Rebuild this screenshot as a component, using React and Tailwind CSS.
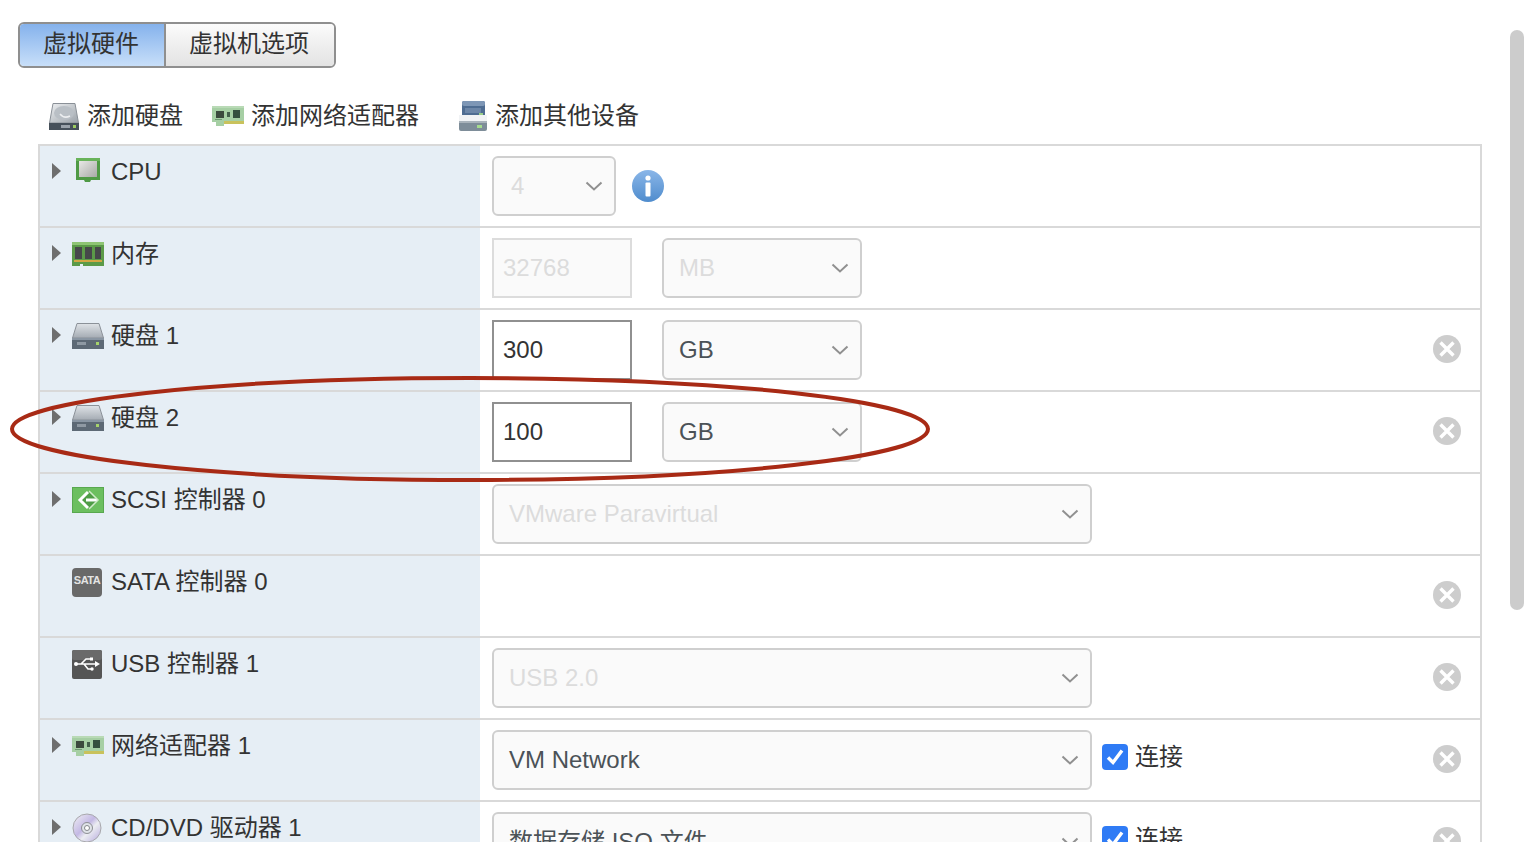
import React from 'react';

const Chevron = () => (
  <svg width="18" height="10" viewBox="0 0 18 10" className="shrink-0">
    <path d="M1.5 1.5 L9 8.5 L16.5 1.5" fill="none" stroke="#909090" strokeWidth="2" />
  </svg>
);

const Arrow = () => (
  <svg width="9" height="16" viewBox="0 0 9 16" className="shrink-0">
    <path d="M0 0 L9 8 L0 16 Z" fill="#6e6e6e" />
  </svg>
);

const HddIcon = () => (
  <svg width="32" height="26" viewBox="0 0 32 26">
    <defs>
      <linearGradient id="hddTop" x1="0" y1="0" x2="0" y2="1">
        <stop offset="0" stopColor="#dfe3e7" />
        <stop offset="1" stopColor="#a4abb3" />
      </linearGradient>
    </defs>
    <path d="M5 0.5 H27 L31.5 15 H0.5 Z" fill="url(#hddTop)" stroke="#8b9198" />
    <rect x="0" y="15" width="32" height="11" fill="#5d6975" />
    <rect x="0" y="15" width="32" height="2" fill="#8a96a3" />
    <rect x="5" y="19" width="9" height="3" fill="#8f99a3" />
    <rect x="24" y="19" width="3" height="3" fill="#a6d36b" />
  </svg>
);

const BigHddIcon = () => (
  <svg width="30" height="27" viewBox="0 0 30 27">
    <defs>
      <linearGradient id="bigHdd" x1="0" y1="0" x2="1" y2="1">
        <stop offset="0" stopColor="#eef0f2" />
        <stop offset="1" stopColor="#9aa1a8" />
      </linearGradient>
    </defs>
    <path d="M4 0.5 H26 L29.5 20 H0.5 Z" fill="url(#bigHdd)" stroke="#8a9097" />
    <ellipse cx="15" cy="10" rx="10" ry="7" fill="#b9bfc5" />
    <path d="M11 11 Q15 16 21 13" fill="none" stroke="#eceef0" strokeWidth="1.5" />
    <rect x="0" y="20" width="30" height="7" fill="#46505a" />
    <rect x="12" y="22" width="9" height="3" fill="#9aa2aa" />
    <rect x="24" y="22" width="3" height="3" fill="#9ccc62" />
  </svg>
);

const NicIcon = () => (
  <svg width="32" height="20" viewBox="0 0 32 20">
    <path d="M0 0 H32 V17 H31 V18 H12 V20 H4 V16 H0 Z" fill="#a6cfa4" />
    <path d="M0 0 H32 V2 H0 Z" fill="#b9dab6" />
    <rect x="4" y="5" width="8" height="7" fill="#3b4a3d" />
    <rect x="15" y="6" width="3" height="5" fill="#44604c" />
    <rect x="21" y="4" width="7" height="8" fill="#35503f" />
    <rect x="12" y="15" width="20" height="3" fill="#c9c25c" />
    <rect x="3" y="13" width="7" height="1" fill="#6f9a72" />
  </svg>
);

const StorageIcon = () => (
  <svg width="28" height="30" viewBox="0 0 28 30">
    <rect x="3" y="0" width="23" height="16" rx="2" fill="#4f6d92" />
    <rect x="3" y="0" width="23" height="5" rx="2" fill="#7e97b6" />
    <rect x="6" y="7" width="16" height="5" fill="#6d87a8" />
    <rect x="20" y="12" width="4" height="2" fill="#9bd08a" />
    <rect x="0" y="14" width="28" height="7" fill="#f1f3f5" />
    <rect x="0" y="20" width="28" height="10" rx="2" fill="#7e8d99" />
    <rect x="0" y="20" width="28" height="2" fill="#a9b3bb" />
    <rect x="18" y="24" width="5" height="3" fill="#a5dc8e" />
  </svg>
);

const CpuIcon = () => (
  <svg width="24" height="24" viewBox="0 0 24 24">
    <defs>
      <linearGradient id="cpuCore" x1="0" y1="0" x2="1" y2="1">
        <stop offset="0" stopColor="#e8e8e6" />
        <stop offset="1" stopColor="#a8aaa6" />
      </linearGradient>
    </defs>
    <path d="M0 0 H24 V22 H15 L14 24 H9 L8 22 H0 Z" fill="#4f9a45" />
    <path d="M0 0 H24 V3 H0 Z" fill="#68b35a" />
    <rect x="3" y="3" width="18" height="16" fill="url(#cpuCore)" />
  </svg>
);

const RamIcon = () => (
  <svg width="32" height="24" viewBox="0 0 32 24">
    <rect x="0" y="0" width="32" height="22" fill="#5b9a48" />
    <rect x="0" y="0" width="32" height="3" fill="#8ec474" />
    <rect x="3" y="5" width="7" height="12" fill="#46484a" />
    <rect x="13" y="5" width="7" height="12" fill="#46484a" />
    <rect x="23" y="5" width="6" height="12" fill="#46484a" />
    <rect x="2" y="18" width="28" height="2" fill="#d3a642" />
    <rect x="0" y="22" width="8" height="2" fill="#5b9a48" />
    <rect x="11" y="22" width="21" height="2" fill="#5b9a48" />
  </svg>
);

const ScsiIcon = () => (
  <svg width="32" height="26" viewBox="0 0 32 26">
    <rect width="32" height="26" fill="#58a84e" />
    <rect x="1" y="1" width="30" height="24" fill="#6cbf5f" />
    <path d="M17 4 L26 13 L17 22 L8 13 Z" fill="#4f9d46" />
    <path d="M16 5 L8 13 L16 21" fill="none" stroke="#fff" strokeWidth="3" />
    <path d="M14 13 H25" stroke="#fff" strokeWidth="3" />
    <path d="M17 4 L26 13 L17 22" fill="none" stroke="#cfeac8" strokeWidth="1.5" />
  </svg>
);

const SataIcon = () => (
  <div className="w-[30px] h-[29px] rounded-sm bg-[#696969] flex items-center justify-center pb-1 text-[#e4e4e4] text-[11px] font-bold leading-none tracking-[-0.5px]">
    SATA
  </div>
);

const UsbIcon = () => (
  <svg width="30" height="29" viewBox="0 0 30 29">
    <rect width="30" height="29" rx="2" fill="#555" />
    <rect width="30" height="10" rx="2" fill="#6a6a6a" />
    <path d="M3 14 H26 M9 14 L14 9 H19 M12 14 L16 19 H19" fill="none" stroke="#fff" strokeWidth="1.6" />
    <path d="M23 11 L28 14 L23 17 Z" fill="#fff" />
    <circle cx="4" cy="14" r="2" fill="#fff" />
    <rect x="18" y="7.5" width="3" height="3" fill="#fff" />
    <circle cx="20" cy="19" r="1.7" fill="#fff" />
  </svg>
);

const DiscIcon = () => (
  <svg width="30" height="30" viewBox="0 0 30 30">
    <defs>
      <linearGradient id="disc" x1="0" y1="0" x2="1" y2="1">
        <stop offset="0" stopColor="#f2f2f4" />
        <stop offset="0.45" stopColor="#c3b8e4" />
        <stop offset="0.6" stopColor="#eceef2" />
        <stop offset="1" stopColor="#b4a8dd" />
      </linearGradient>
    </defs>
    <circle cx="15" cy="15" r="14" fill="url(#disc)" stroke="#a8a8ac" />
    <circle cx="15" cy="15" r="5.5" fill="#dfe3e8" stroke="#8d8f94" />
    <circle cx="15" cy="15" r="2.5" fill="#fff" stroke="#85878c" />
  </svg>
);

const InfoIcon = () => (
  <svg width="32" height="32" viewBox="0 0 32 32" className="shrink-0">
    <defs>
      <linearGradient id="info" x1="0" y1="0" x2="0" y2="1">
        <stop offset="0" stopColor="#8ab6e8" />
        <stop offset="1" stopColor="#4f8ccd" />
      </linearGradient>
    </defs>
    <circle cx="16" cy="16" r="16" fill="url(#info)" />
    <circle cx="16" cy="8" r="2.6" fill="#fff" />
    <rect x="13.5" y="12.5" width="5" height="14" rx="1" fill="#fff" />
  </svg>
);

const RemoveIcon = () => (
  <svg width="28" height="28" viewBox="0 0 28 28" className="shrink-0">
    <circle cx="14" cy="14" r="14" fill="#cdcdcd" />
    <path d="M7.5 7.5 L20.5 20.5 M20.5 7.5 L7.5 20.5" stroke="#fff" strokeWidth="3.4" />
  </svg>
);

const SelectBox = ({ value, width, disabled, pad = 'pl-[15px]' }) => (
  <div className={`${width} ${pad} h-[60px] shrink-0 rounded-md border-2 border-[#cfcfcf] ${disabled ? 'text-[#dcdcdc]' : 'text-[#4b5257]'} bg-[#fafafa] flex items-center justify-between pr-[11px]`}>
    <span>{value}</span>
    <Chevron />
  </div>
);

const SizeInput = ({ value, disabled }) => (
  <div className={`w-[140px] h-[60px] shrink-0 border-2 flex items-center pl-[9px] ${disabled ? 'border-[#dcdcdc] bg-[#fafafa] text-[#dcdcdc]' : 'border-[#909090] bg-white text-[#333]'}`}>
    {value}
  </div>
);

const Connect = () => (
  <div className="flex items-center gap-[7px] ml-[10px] -mt-[6px]">
    <svg width="26" height="26" viewBox="0 0 26 26">
      <rect width="26" height="26" rx="4" fill="#2f7bf5" />
      <path d="M6 13.5 L11 18.5 L20 6.5" fill="none" stroke="#fff" strokeWidth="3.4" />
    </svg>
    <span>连接</span>
  </div>
);

const SizeControls = ({ value, unit, disabled }) => (
  <div className="flex gap-[30px]">
    <SizeInput value={value} disabled={disabled} />
    <SelectBox value={unit} width="w-[200px]" disabled={disabled} />
  </div>
);

const rows = [
  { icon: <CpuIcon />, label: 'CPU', arrow: true, iconClass: 'pl-[4px] pb-[4px]', control: <><SelectBox value="4" width="w-[124px]" pad="pl-[17px]" disabled /><div className="ml-4"><InfoIcon /></div></> },
  { icon: <RamIcon />, label: '内存', arrow: true, control: <SizeControls value="32768" unit="MB" disabled /> },
  { icon: <HddIcon />, label: '硬盘 1', arrow: true, remove: true, control: <SizeControls value="300" unit="GB" /> },
  { icon: <HddIcon />, label: '硬盘 2', arrow: true, remove: true, control: <SizeControls value="100" unit="GB" /> },
  { icon: <ScsiIcon />, label: 'SCSI 控制器 0', arrow: true, control: <SelectBox value="VMware Paravirtual" width="w-[600px]" disabled /> },
  { icon: <SataIcon />, label: 'SATA 控制器 0', remove: true },
  { icon: <UsbIcon />, label: 'USB 控制器 1', remove: true, control: <SelectBox value="USB 2.0" width="w-[600px]" disabled /> },
  { icon: <NicIcon />, label: '网络适配器 1', arrow: true, remove: true, control: <><SelectBox value="VM Network" width="w-[600px]" /><Connect /></> },
  { icon: <DiscIcon />, label: 'CD/DVD 驱动器 1', arrow: true, remove: true, control: <><SelectBox value="数据存储 ISO 文件" width="w-[600px]" /><Connect /></> },
];

const Row = ({ row }) => (
  <div className="flex h-[82px] shrink-0 border-b-2 border-[#d9d9d9]">
    <div className="w-[440px] shrink-0 bg-[#e6eef5] flex items-start pt-[11px]">
      <div className="w-[32px] pl-3 h-[30px] pb-[2px] flex items-center">{row.arrow && <Arrow />}</div>
      <div className={`w-[39px] h-[30px] flex items-center ${row.iconClass || ''}`}>{row.icon}</div>
      <span className="leading-[30px] text-[#333]">{row.label}</span>
    </div>
    <div className="flex-1 flex items-center pl-3 pr-[19px]">
      {row.control}
      {row.remove && (
        <div className="ml-auto -mt-[2px]">
          <RemoveIcon />
        </div>
      )}
    </div>
  </div>
);

const App = () => {
  return (
    <div className="relative w-full h-[842px] overflow-hidden bg-white text-2xl font-['Liberation_Sans','Noto_Sans_CJK_SC',sans-serif] text-[#333]">
      <div className="pt-[22px] pl-[18px]">
        <div className="flex w-[318px] h-[46px] rounded-md border-2 border-[#8f8f8f] overflow-hidden">
          <div className="w-[146px] h-full pr-[2px] pb-[2px] border-r-2 border-r-[#8f8f8f] bg-gradient-to-b from-[#85b2ec] to-[#c8dff9] flex items-center justify-center">虚拟硬件</div>
          <div className="flex-1 h-full pr-[2px] pb-[2px] bg-gradient-to-b from-[#fbfbfb] to-[#e3e3e3] flex items-center justify-center">虚拟机选项</div>
        </div>
      </div>

      <div className="flex items-center h-[30px] mt-[33px] pl-[49px]">
        <BigHddIcon />
        <span className="ml-2">添加硬盘</span>
        <div className="ml-[29px]"><NicIcon /></div>
        <span className="ml-[7px]">添加网络适配器</span>
        <div className="ml-[40px]"><StorageIcon /></div>
        <span className="ml-2">添加其他设备</span>
      </div>

      <div className="ml-[38px] mt-[13px] w-[1444px] border-x-2 border-t-2 border-[#d9d9d9] flex flex-col">
        {rows.map((row) => (
          <Row key={row.label} row={row} />
        ))}
      </div>

      {/* callout drawn over the table */}
      <svg className="absolute left-0 top-[370px] pointer-events-none" width="960" height="120" viewBox="0 370 960 120">
        <ellipse cx="470" cy="429" rx="458" ry="51" fill="none" stroke="#a82a15" strokeWidth="4" />
      </svg>

      {/* overlay scrollbar */}
      <div className="absolute right-0 top-[30px] w-[14px] h-[580px] rounded-full bg-[#cccccc]" />
    </div>
  );
};

export default App;
